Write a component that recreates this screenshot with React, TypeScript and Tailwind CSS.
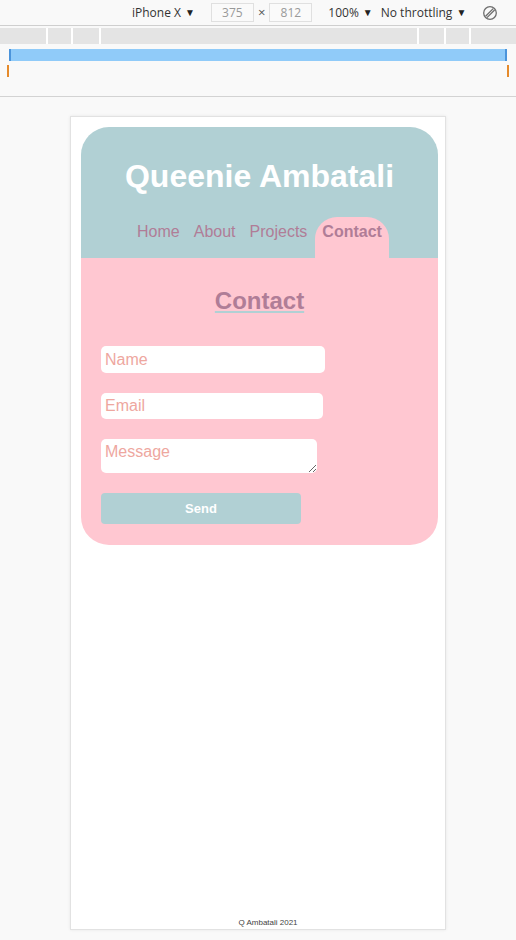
import React from "react";

const ui = { fontFamily: '"Open Sans", "Noto Sans", sans-serif' };
const arial = { fontFamily: '"Liberation Sans", Arial, sans-serif' };

function Caret() {
  return <span className="ml-[4px] text-[10px] text-[#222]">▼</span>;
}

function RotateIcon() {
  return (
    <svg width="16" height="16" viewBox="0 0 16 16" fill="none" stroke="#6e6e6e" strokeWidth="1.3">
      <circle cx="8" cy="8" r="6.3" />
      <path d="M3.6 11.2 L11.2 3.6 M5 12.6 L12.6 5" />
    </svg>
  );
}

function DevToolbar() {
  const segments = ["w-[46px]", "w-[23px]", "w-[26px]", "w-[316px]", "w-[25px]", "w-[23px]", "flex-1"];
  return (
    <div className="bg-[#f9f9f9]" style={ui}>
      <div className="h-[26px] flex items-center text-[12px] text-[#333] border-b border-[#cfcfcf]">
        <div className="ml-[132px] flex items-center">
          iPhone X
          <Caret />
        </div>
        <div className="ml-[16px] w-[43px] h-[19px] border border-[#e0e0e0] bg-[#fafafa] flex items-center justify-center text-[#999]">
          375
        </div>
        <span className="mx-[4px] text-[13px] text-[#555]">×</span>
        <div className="w-[43px] h-[19px] border border-[#e0e0e0] bg-[#fafafa] flex items-center justify-center text-[#999]">
          812
        </div>
        <div className="ml-[16px] flex items-center">
          100%
          <Caret />
        </div>
        <div className="ml-[8px] flex items-center">
          No throttling
          <Caret />
        </div>
        <div className="ml-[16px]">
          <RotateIcon />
        </div>
      </div>
      <div className="pt-[2px] bg-[#f9f9f9]">
        <div className="h-[16px] flex gap-[2px] bg-white">
          {segments.map((s, i) => (
            <div key={i} className={`${s} bg-[#e4e4e4]`} />
          ))}
        </div>
      </div>
      <div className="pt-[5px] px-[9px]">
        <div className="h-[12px] bg-[#90cbf9] border-x-2 border-[#4b94db]" />
      </div>
      <div className="pt-[4px] px-[7px] flex justify-between">
        <div className="w-[2px] h-[12px] bg-[#e58a2b]" />
        <div className="w-[2px] h-[12px] bg-[#e58a2b]" />
      </div>
      <div className="h-[20px] border-b border-[#d3d3d3]" />
    </div>
  );
}

function Field({ placeholder, w, h }: { placeholder: string; w: string; h: string }) {
  return (
    <input
      placeholder={placeholder}
      className={`${w} ${h} block bg-white rounded-[5px] pl-[4px] text-[16px] outline-none placeholder:text-[#eea79f]`}
      style={arial}
    />
  );
}

export default function App() {
  return (
    <div className="w-[516px] h-[940px] bg-[#f9f9f9] overflow-hidden">
      <DevToolbar />
      <div className="mt-[19px] mx-auto w-[376px] h-[814px] bg-white border border-[#e2e2e2] shadow-[0_0_3px_rgba(0,0,0,0.08)] flex flex-col" style={arial}>
        <div className="ml-[10px] mt-[10px] w-[357px] rounded-[28px] overflow-hidden">
          <header className="bg-[#b1d0d4] pt-[30px] flex flex-col items-center">
            <h1 className="text-[32px] leading-[38px] font-bold text-white">Queenie Ambatali</h1>
            <nav className="mt-[22px] flex text-[16px] leading-[18px] text-[#b07d97]">
              <a className="px-[7px] pt-[6px] pb-[17px]">Home</a>
              <a className="px-[7px] pt-[6px] pb-[17px]">About</a>
              <a className="px-[7px] pt-[6px] pb-[17px]">Projects</a>
              <a className="ml-[1px] px-[7px] pt-[6px] pb-[17px] bg-[#ffc7d1] rounded-t-[22px] font-bold">Contact</a>
            </nav>
          </header>
          <section className="bg-[#ffc7d1] pt-[29px] pb-[21px] px-[20px]">
            <h2 className="text-center text-[24px] leading-[28px] font-bold text-[#b07d97] underline decoration-[#b1d0d4] decoration-2 underline-offset-[2px]">
              Contact
            </h2>
            <form className="mt-[31px] flex flex-col gap-[20px]" onSubmit={(e) => e.preventDefault()}>
              <Field placeholder="Name" w="w-[224px]" h="h-[27px]" />
              <Field placeholder="Email" w="w-[222px]" h="h-[26px]" />
              <textarea
                placeholder="Message"
                className="block w-[216px] h-[34px] bg-white rounded-[5px] pl-[4px] pt-[4px] text-[16px] leading-[18px] outline-none placeholder:text-[#eea79f]"
                style={arial}
              />
              <button className="w-[200px] h-[31px] bg-[#b1d0d4] rounded-[4px] text-white text-[13px] font-bold">
                Send
              </button>
            </form>
          </section>
        </div>
        <footer className="mt-auto mb-0 pl-[20px] text-center text-[8px] leading-[12px] text-[#444]">Q Ambatali 2021</footer>
      </div>
    </div>
  );
}
